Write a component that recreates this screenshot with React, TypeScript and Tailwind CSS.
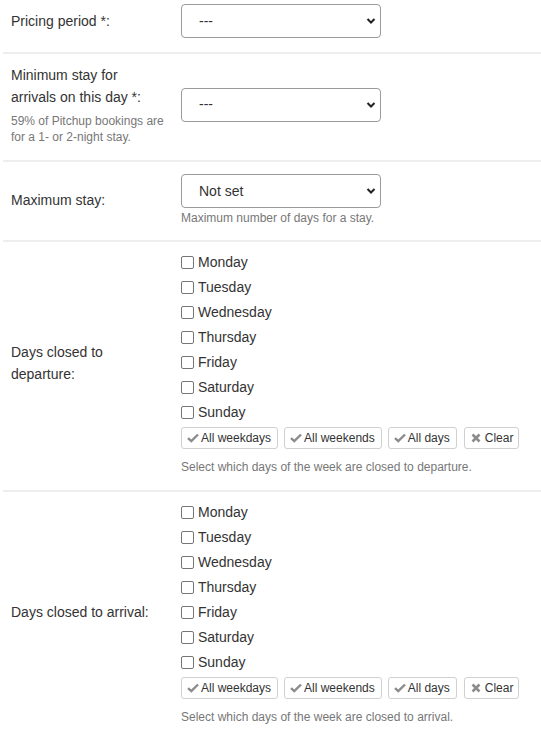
const days = ["Monday", "Tuesday", "Wednesday", "Thursday", "Friday", "Saturday", "Sunday"]

function Chevron() {
  return (
    <svg className="pointer-events-none absolute right-[5px] top-1/2 -translate-y-1/2" width="10" height="7" viewBox="0 0 10 7">
      <path d="M1.5 1.5 L5 5 L8.5 1.5" fill="none" stroke="#222" strokeWidth="2" />
    </svg>
  )
}

function Select({ value }: { value: string }) {
  return (
    <div className="relative w-[200px]">
      <select
        defaultValue={value}
        className="w-full h-[34px] appearance-none rounded-[4px] border border-[#9a9a9a] bg-white pl-[17px] pr-6 text-[14px] text-[#333] outline-none"
      >
        <option>{value}</option>
      </select>
      <Chevron />
    </div>
  )
}

function CheckIcon() {
  return (
    <svg width="12" height="10" viewBox="0 0 12 10">
      <path d="M1 5.2 L4.3 8.2 L11 1.5" fill="none" stroke="#8c8c8c" strokeWidth="2.4" />
    </svg>
  )
}

function CrossIcon() {
  return (
    <svg width="10" height="10" viewBox="0 0 10 10">
      <path d="M1.5 1.5 L8.5 8.5 M8.5 1.5 L1.5 8.5" fill="none" stroke="#8c8c8c" strokeWidth="2.6" />
    </svg>
  )
}

function SmallButton({ label, cross }: { label: string; cross?: boolean }) {
  return (
    <button
      className={
        cross
          ? "flex h-[22px] items-center gap-[4px] rounded-[3px] border border-[#d0d0d0] bg-white pl-[6px] pr-[5px] text-[12px] text-[#333]"
          : "flex h-[22px] items-center gap-[2px] rounded-[3px] border border-[#d0d0d0] bg-white pl-[5px] pr-[6px] text-[12px] text-[#333]"
      }
    >
      {cross ? <CrossIcon /> : <CheckIcon />}
      <span>{label}</span>
    </button>
  )
}

function DayChecks({ hint }: { hint: string }) {
  return (
    <div className="flex flex-col">
      {days.map((d) => (
        <label key={d} className="flex h-[25px] items-center gap-[4px] text-[14px] text-[#333]">
          <span className="inline-block h-[13px] w-[13px] rounded-[2px] border border-[#767676] bg-white" />
          {d}
        </label>
      ))}
      <div className="mt-[2px] flex gap-[6px]">
        <SmallButton label="All weekdays" />
        <SmallButton label="All weekends" />
        <SmallButton label="All days" />
        <div className="ml-[1px]">
          <SmallButton label="Clear" cross />
        </div>
      </div>
      <p className="mt-[10px] text-[12px] leading-[16px] text-[#777]">{hint}</p>
    </div>
  )
}

export default function App() {
  return (
    <div className="min-h-screen bg-white" style={{ fontFamily: '"Liberation Sans", Arial, sans-serif' }}>
      <div className="ml-[3px]">
        <div className="flex items-center border-b-2 border-[#eeeeee] pt-[4px] pb-[14px]">
          <div className="w-[178px] pl-[8px] text-[14px] text-[#333]">Pricing period *:</div>
          <Select value="---" />
        </div>

        <div className="flex items-center border-b-2 border-[#eeeeee] pt-[10px] pb-[15px]">
          <div className="w-[178px] pl-[8px] pr-2">
            <div className="text-[14px] leading-[22px] text-[#333]">
              Minimum stay for
              <br />
              arrivals on this day *:
            </div>
            <p className="mt-[5px] text-[12px] leading-[16px] text-[#777]">
              59% of Pitchup bookings are
              <br />
              for a 1- or 2-night stay.
            </p>
          </div>
          <Select value="---" />
        </div>

        <div className="flex items-center border-b-2 border-[#eeeeee] pt-[12px] pb-[14px]">
          <div className="w-[178px] pl-[8px] text-[14px] text-[#333]">Maximum stay:</div>
          <div>
            <Select value="Not set" />
            <p className="mt-[2px] text-[12px] leading-[16px] text-[#777]">Maximum number of days for a stay.</p>
          </div>
        </div>

        <div className="flex items-center border-b-2 border-[#eeeeee] pt-[8px] pb-[15px]">
          <div className="w-[178px] pl-[8px] text-[14px] leading-[22px] text-[#333]">
            Days closed to
            <br />
            departure:
          </div>
          <DayChecks hint="Select which days of the week are closed to departure." />
        </div>

        <div className="flex items-center pt-[8px] pb-[15px]">
          <div className="w-[178px] pl-[8px] text-[14px] text-[#333]">Days closed to arrival:</div>
          <DayChecks hint="Select which days of the week are closed to arrival." />
        </div>
      </div>
    </div>
  )
}
